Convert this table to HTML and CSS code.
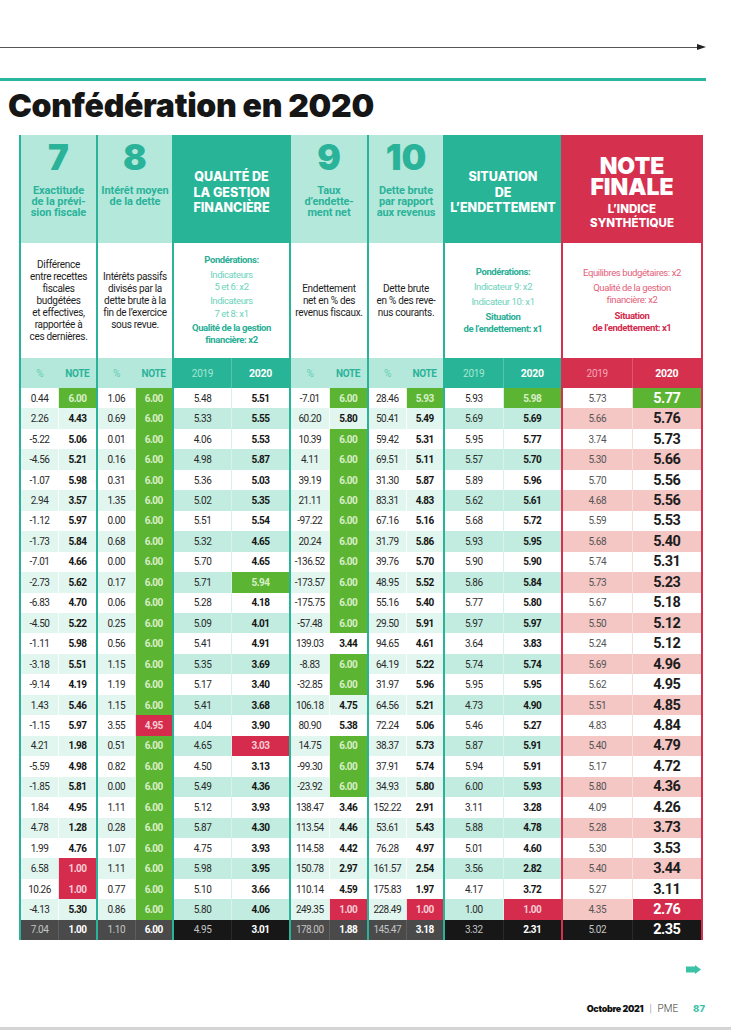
FILE: index.html
```html
<!DOCTYPE html>
<html lang="fr">
<head>
<meta charset="utf-8">
<title>Confédération en 2020</title>
<link rel="stylesheet" href="styles.css">
</head>
<body>
<div class="page">
  <div class="toprule"><div class="line"></div><svg width="9" height="6" viewBox="0 0 9 6"><path d="M0 0L9 3L0 6Z" fill="#222"/></svg></div>
  <div class="tealrule"></div>
  <h1 class="title">Confédération en 2020</h1>

  <div class="tbl">
    <!-- Indicateur 7 -->
    <div class="grp ind bl g7">
      <div class="hd"><div class="num">7</div><div class="lbl">Exactitude<br>de la prévi-<br>sion fiscale</div></div>
      <div class="desc">Différence<br>entre recettes<br>fiscales<br>budgétées<br>et effectives,<br>rapportée à<br>ces dernières.</div>
      <div class="sub"><span>%</span><span>NOTE</span></div>
      <div class="rows">
        <div class="r"><span>0.44</span><span class="g">6.00</span></div>
        <div class="r"><span>2.26</span><span>4.43</span></div>
        <div class="r"><span>-5.22</span><span>5.06</span></div>
        <div class="r"><span>-4.56</span><span>5.21</span></div>
        <div class="r"><span>-1.07</span><span>5.98</span></div>
        <div class="r"><span>2.94</span><span>3.57</span></div>
        <div class="r"><span>-1.12</span><span>5.97</span></div>
        <div class="r"><span>-1.73</span><span>5.84</span></div>
        <div class="r"><span>-7.01</span><span>4.66</span></div>
        <div class="r"><span>-2.73</span><span>5.62</span></div>
        <div class="r"><span>-6.83</span><span>4.70</span></div>
        <div class="r"><span>-4.50</span><span>5.22</span></div>
        <div class="r"><span>-1.11</span><span>5.98</span></div>
        <div class="r"><span>-3.18</span><span>5.51</span></div>
        <div class="r"><span>-9.14</span><span>4.19</span></div>
        <div class="r"><span>1.43</span><span>5.46</span></div>
        <div class="r"><span>-1.15</span><span>5.97</span></div>
        <div class="r"><span>4.21</span><span>1.98</span></div>
        <div class="r"><span>-5.59</span><span>4.98</span></div>
        <div class="r"><span>-1.85</span><span>5.81</span></div>
        <div class="r"><span>1.84</span><span>4.95</span></div>
        <div class="r"><span>4.78</span><span>1.28</span></div>
        <div class="r"><span>1.99</span><span>4.76</span></div>
        <div class="r"><span>6.58</span><span class="x">1.00</span></div>
        <div class="r"><span>10.26</span><span class="x">1.00</span></div>
        <div class="r"><span>-4.13</span><span>5.30</span></div>
      </div>
      <div class="tot"><span>7.04</span><span>1.00</span></div>
    </div>

    <!-- Indicateur 8 -->
    <div class="grp ind bl">
      <div class="hd"><div class="num">8</div><div class="lbl">Intérêt moyen<br>de la dette</div></div>
      <div class="desc">Intérêts passifs<br>divisés par la<br>dette brute à la<br>fin de l’exercice<br>sous revue.</div>
      <div class="sub"><span>%</span><span>NOTE</span></div>
      <div class="rows">
        <div class="r"><span>1.06</span><span class="g">6.00</span></div>
        <div class="r"><span>0.69</span><span class="g">6.00</span></div>
        <div class="r"><span>0.01</span><span class="g">6.00</span></div>
        <div class="r"><span>0.16</span><span class="g">6.00</span></div>
        <div class="r"><span>0.31</span><span class="g">6.00</span></div>
        <div class="r"><span>1.35</span><span class="g">6.00</span></div>
        <div class="r"><span>0.00</span><span class="g">6.00</span></div>
        <div class="r"><span>0.68</span><span class="g">6.00</span></div>
        <div class="r"><span>0.00</span><span class="g">6.00</span></div>
        <div class="r"><span>0.17</span><span class="g">6.00</span></div>
        <div class="r"><span>0.06</span><span class="g">6.00</span></div>
        <div class="r"><span>0.25</span><span class="g">6.00</span></div>
        <div class="r"><span>0.56</span><span class="g">6.00</span></div>
        <div class="r"><span>1.15</span><span class="g">6.00</span></div>
        <div class="r"><span>1.19</span><span class="g">6.00</span></div>
        <div class="r"><span>1.15</span><span class="g">6.00</span></div>
        <div class="r"><span>3.55</span><span class="x">4.95</span></div>
        <div class="r"><span>0.51</span><span class="g">6.00</span></div>
        <div class="r"><span>0.82</span><span class="g">6.00</span></div>
        <div class="r"><span>0.00</span><span class="g">6.00</span></div>
        <div class="r"><span>1.11</span><span class="g">6.00</span></div>
        <div class="r"><span>0.28</span><span class="g">6.00</span></div>
        <div class="r"><span>1.07</span><span class="g">6.00</span></div>
        <div class="r"><span>1.11</span><span class="g">6.00</span></div>
        <div class="r"><span>0.77</span><span class="g">6.00</span></div>
        <div class="r"><span>0.86</span><span class="g">6.00</span></div>
      </div>
      <div class="tot"><span>1.10</span><span>6.00</span></div>
    </div>

    <!-- Qualité de la gestion financière -->
    <div class="grp qs q">
      <div class="hd">QUALITÉ DE<br>LA GESTION<br>FINANCIÈRE</div>
      <div class="desc pond">
        <p class="k">Pondérations:</p>
        <p class="l">Indicateurs<br>5 et 6: x2</p>
        <p class="l">Indicateurs<br>7 et 8: x1</p>
        <p class="k">Qualité de la gestion<br>financière: x2</p>
      </div>
      <div class="sub"><span>2019</span><span>2020</span></div>
      <div class="rows">
        <div class="r"><span>5.48</span><span>5.51</span></div>
        <div class="r"><span>5.33</span><span>5.55</span></div>
        <div class="r"><span>4.06</span><span>5.53</span></div>
        <div class="r"><span>4.98</span><span>5.87</span></div>
        <div class="r"><span>5.36</span><span>5.03</span></div>
        <div class="r"><span>5.02</span><span>5.35</span></div>
        <div class="r"><span>5.51</span><span>5.54</span></div>
        <div class="r"><span>5.32</span><span>4.65</span></div>
        <div class="r"><span>5.70</span><span>4.65</span></div>
        <div class="r"><span>5.71</span><span class="g">5.94</span></div>
        <div class="r"><span>5.28</span><span>4.18</span></div>
        <div class="r"><span>5.09</span><span>4.01</span></div>
        <div class="r"><span>5.41</span><span>4.91</span></div>
        <div class="r"><span>5.35</span><span>3.69</span></div>
        <div class="r"><span>5.17</span><span>3.40</span></div>
        <div class="r"><span>5.41</span><span>3.68</span></div>
        <div class="r"><span>4.04</span><span>3.90</span></div>
        <div class="r"><span>4.65</span><span class="x">3.03</span></div>
        <div class="r"><span>4.50</span><span>3.13</span></div>
        <div class="r"><span>5.49</span><span>4.36</span></div>
        <div class="r"><span>5.12</span><span>3.93</span></div>
        <div class="r"><span>5.87</span><span>4.30</span></div>
        <div class="r"><span>4.75</span><span>3.93</span></div>
        <div class="r"><span>5.98</span><span>3.95</span></div>
        <div class="r"><span>5.10</span><span>3.66</span></div>
        <div class="r"><span>5.80</span><span>4.06</span></div>
      </div>
      <div class="tot"><span>4.95</span><span>3.01</span></div>
    </div>

    <!-- Indicateur 9 -->
    <div class="grp ind">
      <div class="hd"><div class="num">9</div><div class="lbl">Taux<br>d’endette-<br>ment net</div></div>
      <div class="desc">Endettement<br>net en % des<br>revenus fiscaux.</div>
      <div class="sub"><span>%</span><span>NOTE</span></div>
      <div class="rows">
        <div class="r"><span>-7.01</span><span class="g">6.00</span></div>
        <div class="r"><span>60.20</span><span>5.80</span></div>
        <div class="r"><span>10.39</span><span class="g">6.00</span></div>
        <div class="r"><span>4.11</span><span class="g">6.00</span></div>
        <div class="r"><span>39.19</span><span class="g">6.00</span></div>
        <div class="r"><span>21.11</span><span class="g">6.00</span></div>
        <div class="r"><span>-97.22</span><span class="g">6.00</span></div>
        <div class="r"><span>20.24</span><span class="g">6.00</span></div>
        <div class="r"><span>-136.52</span><span class="g">6.00</span></div>
        <div class="r"><span>-173.57</span><span class="g">6.00</span></div>
        <div class="r"><span>-175.75</span><span class="g">6.00</span></div>
        <div class="r"><span>-57.48</span><span class="g">6.00</span></div>
        <div class="r"><span>139.03</span><span>3.44</span></div>
        <div class="r"><span>-8.83</span><span class="g">6.00</span></div>
        <div class="r"><span>-32.85</span><span class="g">6.00</span></div>
        <div class="r"><span>106.18</span><span>4.75</span></div>
        <div class="r"><span>80.90</span><span>5.38</span></div>
        <div class="r"><span>14.75</span><span class="g">6.00</span></div>
        <div class="r"><span>-99.30</span><span class="g">6.00</span></div>
        <div class="r"><span>-23.92</span><span class="g">6.00</span></div>
        <div class="r"><span>138.47</span><span>3.46</span></div>
        <div class="r"><span>113.54</span><span>4.46</span></div>
        <div class="r"><span>114.58</span><span>4.42</span></div>
        <div class="r"><span>150.78</span><span>2.97</span></div>
        <div class="r"><span>110.14</span><span>4.59</span></div>
        <div class="r"><span>249.35</span><span class="x">1.00</span></div>
      </div>
      <div class="tot"><span>178.00</span><span>1.88</span></div>
    </div>

    <!-- Indicateur 10 -->
    <div class="grp ind bl thin">
      <div class="hd"><div class="num">10</div><div class="lbl">Dette brute<br>par rapport<br>aux revenus</div></div>
      <div class="desc">Dette brute<br>en % des reve-<br>nus courants.</div>
      <div class="sub"><span>%</span><span>NOTE</span></div>
      <div class="rows">
        <div class="r"><span>28.46</span><span class="g">5.93</span></div>
        <div class="r"><span>50.41</span><span>5.49</span></div>
        <div class="r"><span>59.42</span><span>5.31</span></div>
        <div class="r"><span>69.51</span><span>5.11</span></div>
        <div class="r"><span>31.30</span><span>5.87</span></div>
        <div class="r"><span>83.31</span><span>4.83</span></div>
        <div class="r"><span>67.16</span><span>5.16</span></div>
        <div class="r"><span>31.79</span><span>5.86</span></div>
        <div class="r"><span>39.76</span><span>5.70</span></div>
        <div class="r"><span>48.95</span><span>5.52</span></div>
        <div class="r"><span>55.16</span><span>5.40</span></div>
        <div class="r"><span>29.50</span><span>5.91</span></div>
        <div class="r"><span>94.65</span><span>4.61</span></div>
        <div class="r"><span>64.19</span><span>5.22</span></div>
        <div class="r"><span>31.97</span><span>5.96</span></div>
        <div class="r"><span>64.56</span><span>5.21</span></div>
        <div class="r"><span>72.24</span><span>5.06</span></div>
        <div class="r"><span>38.37</span><span>5.73</span></div>
        <div class="r"><span>37.91</span><span>5.74</span></div>
        <div class="r"><span>34.93</span><span>5.80</span></div>
        <div class="r"><span>152.22</span><span>2.91</span></div>
        <div class="r"><span>53.61</span><span>5.43</span></div>
        <div class="r"><span>76.28</span><span>4.97</span></div>
        <div class="r"><span>161.57</span><span>2.54</span></div>
        <div class="r"><span>175.83</span><span>1.97</span></div>
        <div class="r"><span>228.49</span><span class="x">1.00</span></div>
      </div>
      <div class="tot"><span>145.47</span><span>3.18</span></div>
    </div>

    <!-- Situation de l'endettement -->
    <div class="grp qs s">
      <div class="hd">SITUATION<br>DE<br>L’ENDETTEMENT</div>
      <div class="desc pond">
        <p class="k">Pondérations:</p>
        <p class="l">Indicateur 9: x2</p>
        <p class="l">Indicateur 10: x1</p>
        <p class="k">Situation<br>de l’endettement: x1</p>
      </div>
      <div class="sub"><span>2019</span><span>2020</span></div>
      <div class="rows">
        <div class="r"><span>5.93</span><span class="g">5.98</span></div>
        <div class="r"><span>5.69</span><span>5.69</span></div>
        <div class="r"><span>5.95</span><span>5.77</span></div>
        <div class="r"><span>5.57</span><span>5.70</span></div>
        <div class="r"><span>5.89</span><span>5.96</span></div>
        <div class="r"><span>5.62</span><span>5.61</span></div>
        <div class="r"><span>5.68</span><span>5.72</span></div>
        <div class="r"><span>5.93</span><span>5.95</span></div>
        <div class="r"><span>5.90</span><span>5.90</span></div>
        <div class="r"><span>5.86</span><span>5.84</span></div>
        <div class="r"><span>5.77</span><span>5.80</span></div>
        <div class="r"><span>5.97</span><span>5.97</span></div>
        <div class="r"><span>3.64</span><span>3.83</span></div>
        <div class="r"><span>5.74</span><span>5.74</span></div>
        <div class="r"><span>5.95</span><span>5.95</span></div>
        <div class="r"><span>4.73</span><span>4.90</span></div>
        <div class="r"><span>5.46</span><span>5.27</span></div>
        <div class="r"><span>5.87</span><span>5.91</span></div>
        <div class="r"><span>5.94</span><span>5.91</span></div>
        <div class="r"><span>6.00</span><span>5.93</span></div>
        <div class="r"><span>3.11</span><span>3.28</span></div>
        <div class="r"><span>5.88</span><span>4.78</span></div>
        <div class="r"><span>5.01</span><span>4.60</span></div>
        <div class="r"><span>3.56</span><span>2.82</span></div>
        <div class="r"><span>4.17</span><span>3.72</span></div>
        <div class="r"><span>1.00</span><span class="x">1.00</span></div>
      </div>
      <div class="tot"><span>3.32</span><span>2.31</span></div>
    </div>

    <!-- Note finale -->
    <div class="grp nf">
      <div class="hd"><div class="big"><div>NOTE</div><div>FINALE</div></div><div class="sm">L’INDICE<br>SYNTHÉTIQUE</div></div>
      <div class="desc pond">
        <p class="l">Equilibres budgétaires: x2</p>
        <p class="l">Qualité de la gestion<br>financière: x2</p>
        <p class="k">Situation<br>de l’endettement: x1</p>
      </div>
      <div class="sub"><span>2019</span><span>2020</span></div>
      <div class="rows">
        <div class="r"><span>5.73</span><span class="g">5.77</span></div>
        <div class="r"><span>5.66</span><span>5.76</span></div>
        <div class="r"><span>3.74</span><span>5.73</span></div>
        <div class="r"><span>5.30</span><span>5.66</span></div>
        <div class="r"><span>5.70</span><span>5.56</span></div>
        <div class="r"><span>4.68</span><span>5.56</span></div>
        <div class="r"><span>5.59</span><span>5.53</span></div>
        <div class="r"><span>5.68</span><span>5.40</span></div>
        <div class="r"><span>5.74</span><span>5.31</span></div>
        <div class="r"><span>5.73</span><span>5.23</span></div>
        <div class="r"><span>5.67</span><span>5.18</span></div>
        <div class="r"><span>5.50</span><span>5.12</span></div>
        <div class="r"><span>5.24</span><span>5.12</span></div>
        <div class="r"><span>5.69</span><span>4.96</span></div>
        <div class="r"><span>5.62</span><span>4.95</span></div>
        <div class="r"><span>5.51</span><span>4.85</span></div>
        <div class="r"><span>4.83</span><span>4.84</span></div>
        <div class="r"><span>5.40</span><span>4.79</span></div>
        <div class="r"><span>5.17</span><span>4.72</span></div>
        <div class="r"><span>5.80</span><span>4.36</span></div>
        <div class="r"><span>4.09</span><span>4.26</span></div>
        <div class="r"><span>5.28</span><span>3.73</span></div>
        <div class="r"><span>5.30</span><span>3.53</span></div>
        <div class="r"><span>5.40</span><span>3.44</span></div>
        <div class="r"><span>5.27</span><span>3.11</span></div>
        <div class="r"><span>4.35</span><span class="x">2.76</span></div>
      </div>
      <div class="tot"><span>5.02</span><span>2.35</span></div>
    </div>
  </div>

  <div class="next"><svg width="15" height="9" viewBox="0 0 15 9"><path d="M0 1.5H9V0L15 4.5L9 9V7.5H0Z" fill="#3cc2a6"/></svg></div>
  <div class="folio"><span class="mo">Octobre 2021</span><span class="bar">|</span><span class="pme">PME</span><span class="pg">87</span></div>
  <div class="edge"></div>
</div>
</body>
</html>
```

FILE: styles.css
```css
* { box-sizing: border-box; }
html, body { margin: 0; padding: 0; }
body {
  background: #fff;
  font-family: Roboto, "Liberation Sans", sans-serif;
  color: #222;
}
p { margin: 0; }

.page {
  width: 731px;
  height: 1030px;
  display: flex;
  flex-direction: column;
  overflow: hidden;
}

.toprule {
  display: flex;
  align-items: center;
  width: 706px;
  height: 6px;
  margin-top: 44px;
}
.toprule .line { flex: 1; height: 1px; background: #555; }
.toprule svg { display: block; flex: none; }

.tealrule {
  width: 706px;
  height: 3px;
  background: #27b89e;
  margin-top: 28px;
}

.title {
  margin: 7px 0 0 8px;
  font-family: Inter, sans-serif;
  font-weight: 900;
  font-size: 32px;
  line-height: 36px;
  color: #161616;
  letter-spacing: -0.3px;
}

/* ---------- table ---------- */
.tbl {
  display: flex;
  width: 684px;
  margin: 11px 0 0 19px;
}
.grp {
  display: flex;
  flex-direction: column;
  flex: none;
}
.ind { width: 76px; background: #b4e8da; }
.ind.bl { border-left: 2px solid #2bb39a; }
.ind.g7 { width: 77px; }
.qs { background: #28b496; border-left: 2px solid #28b496; border-right: 2px solid #28b496; }
.q { width: 119px; }
.s { width: 118px; border-right: none; }
.nf { width: 142px; background: #d6304f; border-left: 2px solid #d6304f; border-right: 2px solid #d6304f; }

.hd { height: 108px; text-align: center; }
.ind .hd { padding-top: 6px; }
.num {
  font-family: Inter, sans-serif;
  font-weight: 900;
  font-size: 35px;
  line-height: 32px;
  color: #2bb39a;
}
.lbl {
  margin-top: 12px;
  font-weight: 700;
  font-size: 11px;
  line-height: 11px;
  color: #2bb39a;
  letter-spacing: -0.1px;
}
.qs .hd {
  padding-top: 34px;
  font-family: Inter, sans-serif;
  font-weight: 800;
  font-size: 12.5px;
  line-height: 15.5px;
  color: #fff;
}
.nf .hd { padding-top: 21px; font-family: Inter, sans-serif; color: #fff; }
.nf .big { font-weight: 900; font-size: 23px; line-height: 21px; }
.nf .big div { height: 21px; overflow: visible; }
.nf .sm { font-weight: 800; font-size: 11.5px; line-height: 14px; margin-top: 4px; }

.desc {
  height: 115px;
  background: #fff;
  display: flex;
  flex-direction: column;
  justify-content: center;
  align-items: center;
  text-align: center;
  font-size: 10px;
  line-height: 12px;
  letter-spacing: -0.3px;
  color: #1e1e1e;
}
.pond { font-size: 9.5px; line-height: 12.3px; letter-spacing: -0.4px; }
.pond p + p { margin-top: 2px; }
.q .pond .k { color: #2aae95; font-weight: 700; }
.q .pond .l, .s .pond .l { color: #6dd3bc; }
.s .pond .k { color: #2aae95; font-weight: 700; }
.s .pond p + p { margin-top: 3px; line-height: 12px; }
.nf .pond .l { color: #e5607a; }
.nf .pond .k { color: #d42a4c; font-weight: 700; }
.nf .pond p + p { margin-top: 3px; }

.sub { height: 30px; display: flex; align-items: stretch; font-size: 10px; letter-spacing: -0.3px; }
.sub span { flex: 1; display: flex; align-items: center; justify-content: center; }
.ind .sub span:first-child { color: #63cdb4; }
.ind .sub span + span { color: #2bb39a; font-weight: 700; }
.qs .sub span:first-child { color: #a6e6d5; }
.qs .sub span + span { color: #fff; font-weight: 700; border-left: 1px solid rgba(255,255,255,.22); font-size: 10.5px; }
.nf .sub span:first-child { color: #f3a8b6; }
.nf .sub span + span { color: #fff; font-weight: 700; border-left: 1px solid rgba(255,255,255,.18); font-size: 10.5px; }

.rows { background: #fff; }
.r { height: 20.46px; display: flex; }
.r span {
  flex: 1;
  display: flex;
  align-items: center;
  justify-content: center;
  font-size: 10px;
  letter-spacing: -0.5px;
  color: #2a2a2a;
}
.r span + span { font-weight: 700; color: #151515; border-left: 1px solid rgba(255,255,255,.85); }
.ind .r:nth-child(even) { background: #e1f6ef; }
.qs .r:nth-child(even) { background: #c1ecdf; }
.qs .r span + span { border-left-color: #d6f3ea; }
.nf .r:nth-child(even) { background: #f4c6c4; }
.nf .r span:first-child { color: #555; }
.nf .r span + span { font-size: 14.5px; letter-spacing: -0.6px; color: #1d1d1d; border-left-color: #f7dcdb; }

.r span.g { background: #5cb433; color: #d9efc7; }
.nf .r span.g { color: #fff; }
.r span.x { background: #d52c4e; color: #f8ccd5; }
.nf .r span.x { color: #fff; }

.tot { height: 20px; display: flex; background: #4a4a4a; }
.qs .tot, .nf .tot { background: #171717; }
.tot span {
  flex: 1;
  display: flex;
  align-items: center;
  justify-content: center;
  font-size: 10px;
  letter-spacing: -0.5px;
  color: #c4c4c4;
}
.tot span + span { color: #fff; font-weight: 700; border-left: 1px solid #5e5e5e; }
.qs .tot span + span, .nf .tot span + span { border-left-color: #2a2a2a; }
.nf .tot span + span { font-size: 14.5px; letter-spacing: -0.6px; }

/* ---------- footer ---------- */
.next {
  display: flex;
  justify-content: flex-end;
  padding-right: 30px;
  margin-top: 25px;
}
.next svg { display: block; }
.folio {
  display: flex;
  justify-content: flex-end;
  align-items: center;
  padding-right: 26px;
  margin-top: 29px;
  height: 12px;
  font-size: 10px;
}
.folio .mo { font-family: Inter, sans-serif; font-weight: 900; font-size: 9px; letter-spacing: -0.3px; color: #111; }
.folio .bar { margin: 0 6px; color: #777; font-weight: 300; font-size: 10px; }
.folio .pme { font-weight: 300; font-size: 10px; color: #333; }
.folio .pg { margin-left: 15px; font-family: Inter, sans-serif; font-weight: 800; font-size: 9.5px; color: #3cc2a6; }
.edge { margin-top: auto; height: 3px; background: #d4d4d4; }
```
